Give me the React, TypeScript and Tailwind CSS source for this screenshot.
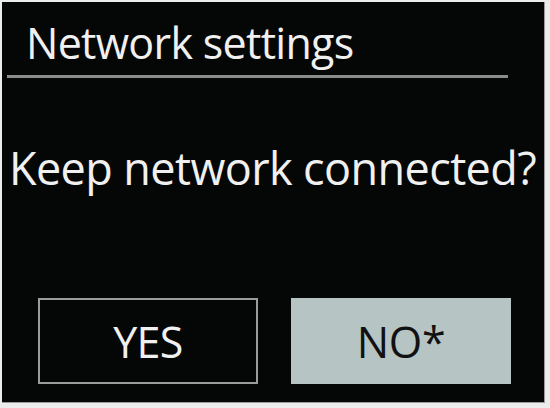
export default function App() {
  return (
    <div className="w-[550px] h-[408px] bg-[#ececec] pt-[2px] pl-[2px]">
      <div className="w-[543px] h-[401px] bg-[#050606] border-r border-b border-[#9a9a9a] flex flex-col font-['Open_Sans',sans-serif] text-[#f0f0f0]">
        {/* header */}
        <div className="h-[73px] pl-[24px] flex items-end">
          <h1 className="text-[43px] leading-none tracking-[-0.7px] pb-[11px] whitespace-nowrap">Network settings</h1>
        </div>
        <div className="ml-[5px] w-[501px] h-[3px] bg-[#8c8c8c]" />

        {/* question */}
        <div className="mt-[67px] pl-[7px]">
          <p className="text-[45px] leading-none tracking-[-0.6px] whitespace-nowrap">Keep network connected?</p>
        </div>

        {/* buttons */}
        <div className="mt-auto mb-[18px] pl-[36px] flex gap-[33px]">
          <div className="w-[220px] h-[86px] border-2 border-[#9c9c9c] flex items-center justify-center">
            <span className="text-[43px] leading-none tracking-[-0.6px]">YES</span>
          </div>
          <div className="w-[220px] h-[86px] bg-[#b6c4c4] flex items-center justify-center">
            <span className="text-[43px] leading-none tracking-[-0.3px] text-[#111]">NO*</span>
          </div>
        </div>
      </div>
    </div>
  );
}
